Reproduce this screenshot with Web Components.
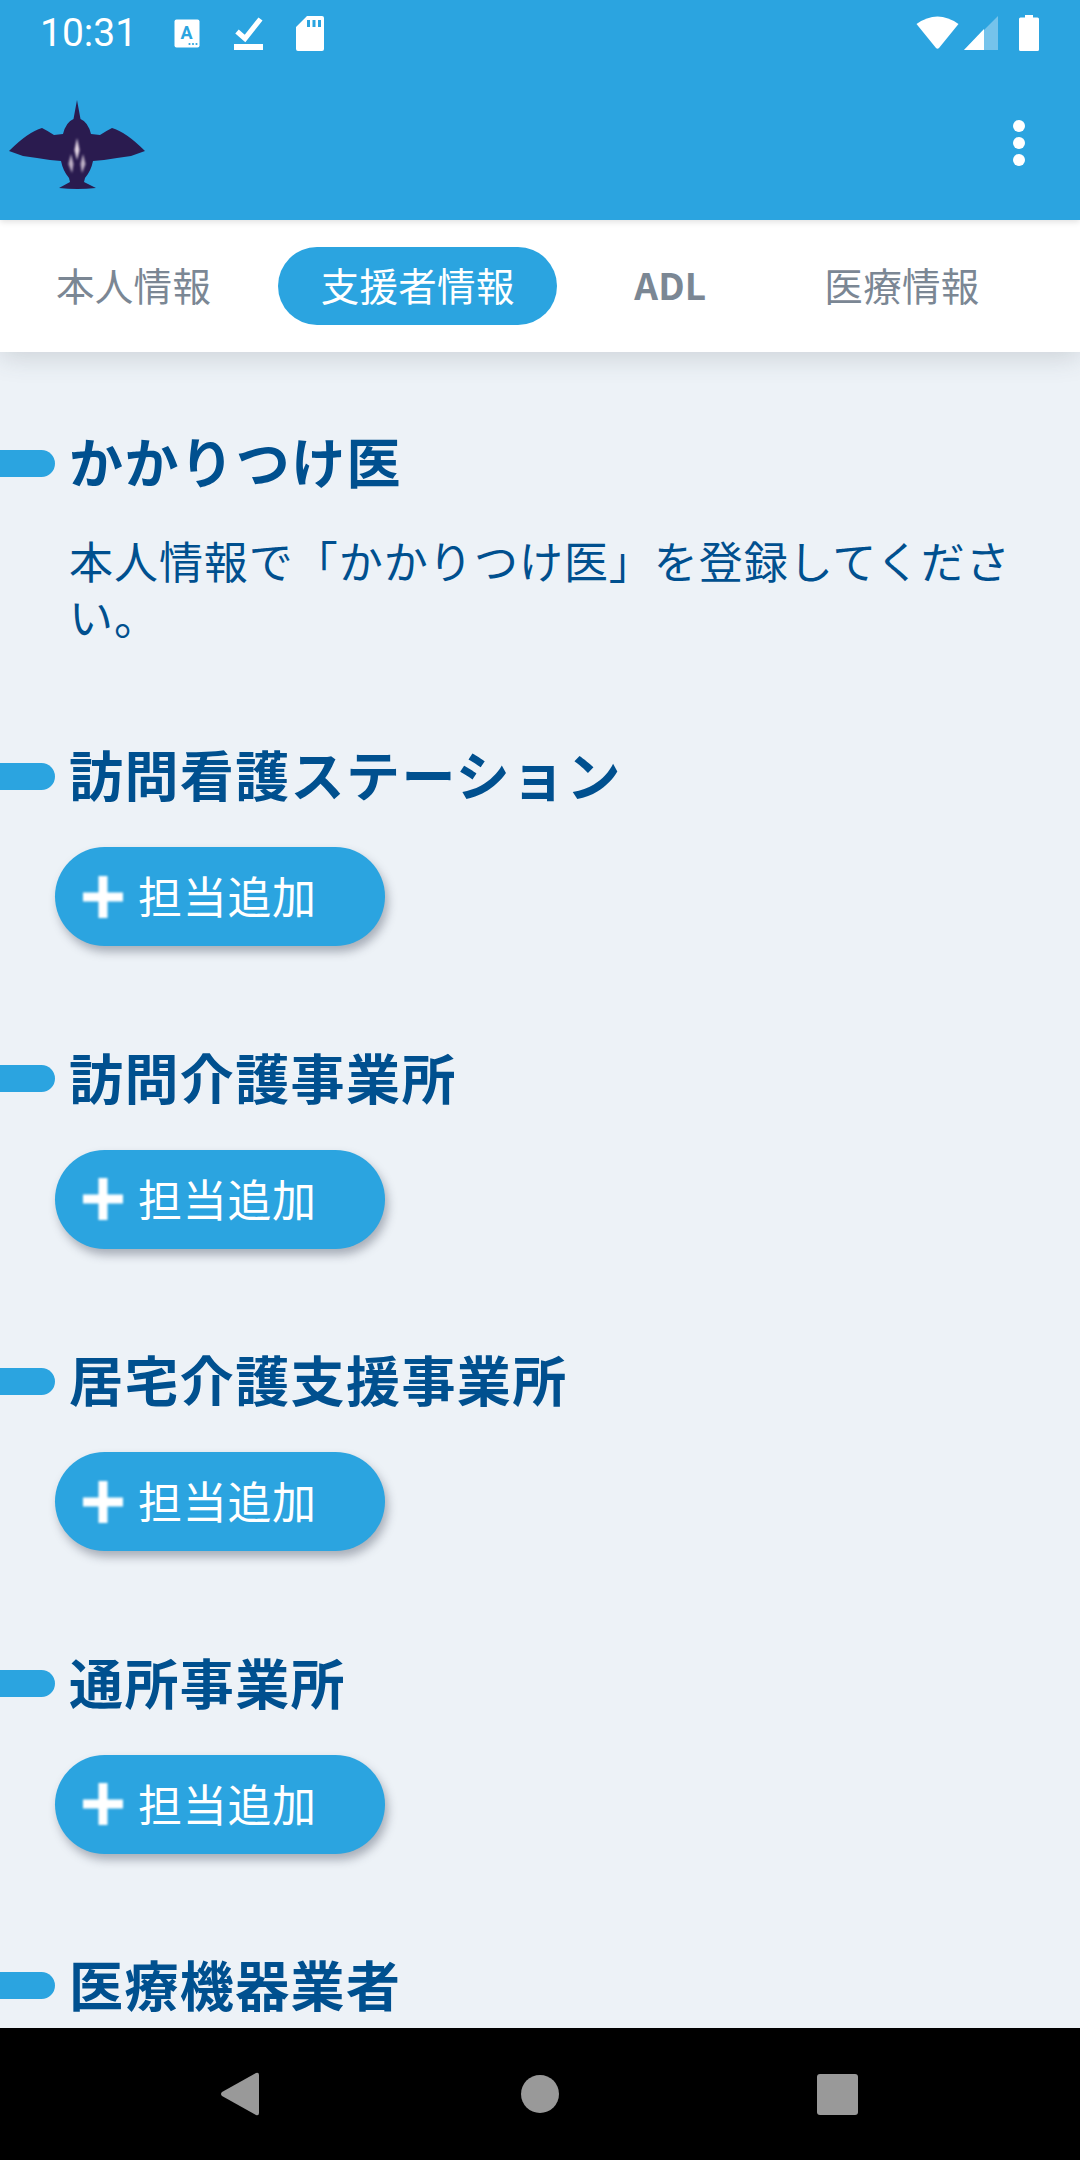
<!DOCTYPE html>
<html lang="ja">
<head>
<meta charset="utf-8">
<title>支援者情報</title>
<style>
  html, body { margin: 0; height: 2160px; overflow: hidden; background: #edf2f7; }
  body { display: flex; flex-direction: column; font-family: "Noto Sans CJK JP", "Noto Sans", sans-serif; }
  main { display: flex; flex-direction: column; flex: 1; min-height: 0; overflow: hidden; gap: 102.4px; padding-top: 81px; }
</style>
</head>
<body>
<app-header></app-header>
<tab-strip>
  <tab-item style="margin-left:14px">本人情報</tab-item>
  <tab-item active style="margin-left:25px">支援者情報</tab-item>
  <tab-item latin style="margin-left:35px">ADL</tab-item>
  <tab-item style="margin-left:34px">医療情報</tab-item>
</tab-strip>
<main>
  <care-section title="かかりつけ医" gap="39">
    <p>本人情報で「かかりつけ医」を登録してください。</p>
  </care-section>
  <care-section title="訪問看護ステーション"><add-button>担当追加</add-button></care-section>
  <care-section title="訪問介護事業所"><add-button>担当追加</add-button></care-section>
  <care-section title="居宅介護支援事業所"><add-button>担当追加</add-button></care-section>
  <care-section title="通所事業所"><add-button>担当追加</add-button></care-section>
  <care-section title="医療機器業者"></care-section>
</main>
<nav-bar></nav-bar>

<script>
(function () {
  const BLUE = '#2ba4e0';

  class AppHeader extends HTMLElement {
    connectedCallback() {
      const root = this.attachShadow({ mode: 'open' });
      root.innerHTML = `
        <style>
          :host { display:flex; flex-direction:column; height:220px; background:${BLUE}; position:relative; z-index:2; box-shadow:0 2px 6px rgba(0,0,0,.12); }
          .status { display:flex; align-items:center; height:66px; padding:0 0 0 40px; color:#fff; }
          .time { font:400 39px/1 Roboto, sans-serif; width:134px; }
          svg { display:block; flex:none; }
          .left { display:flex; align-items:center; flex:1; }
          .right { display:flex; align-items:center; }
          .bar { display:flex; align-items:center; justify-content:space-between; flex:1; padding:4px 55px 0 8px; }
          .dots { display:flex; flex-direction:column; gap:5px; margin-top:-5px; }
          .dots i { display:block; width:12px; height:12px; border-radius:50%; background:#fff; }
        </style>
        <div class="status">
          <span class="time">10:31</span>
          <div class="left">
            <svg width="26" height="29" viewBox="0 0 26 29"><rect x=".5" y=".5" width="25" height="28" rx="2" fill="#fff"/>
              <text x="12.5" y="20" text-anchor="middle" font-family="Roboto, sans-serif" font-weight="700" font-size="18" fill="${BLUE}">A</text>
              <circle cx="15.5" cy="25" r="1.1" fill="${BLUE}"/><circle cx="19" cy="25" r="1.1" fill="${BLUE}"/><circle cx="22.5" cy="25" r="1.1" fill="${BLUE}"/></svg>
            <svg style="margin-left:34px" width="29" height="35" viewBox="0 0 29 35"><path d="M3 15.5 L11 22.5 L26.5 3" fill="none" stroke="#fff" stroke-width="5.2"/><rect y="28" width="29" height="6" fill="#fff"/></svg>
            <svg style="margin-left:33px" width="28" height="35" viewBox="0 0 28 35"><path d="M11 0 H26 a2 2 0 0 1 2 2 V33 a2 2 0 0 1 -2 2 H2 a2 2 0 0 1 -2 -2 V11 Z M11 4 v7 h3 v-7 Z M16.5 4 v7 h3 v-7 Z M22 4 v7 h3 v-7 Z" fill="#fff" fill-rule="evenodd"/></svg>
          </div>
          <div class="right">
            <svg width="43" height="34" viewBox="0 0 43 34"><path d="M0.5 8 Q21.5 -7 42.5 8 L23 32 Q21.5 33.6 20 32 Z" fill="#fff"/></svg>
            <svg style="margin-left:5px" width="35" height="34" viewBox="0 0 35 34"><path d="M34 0 V34 H0 Z" fill="#fff" opacity=".35"/><path d="M20 13 V34 H0 Z" fill="#fff"/></svg>
            <svg style="margin:0 41px 0 20px" width="20" height="36" viewBox="0 0 20 36"><path d="M6 0 H14 V2.500 H18.500 a1.500 1.500 0 0 1 1.500 1.500 V34.500 a1.500 1.500 0 0 1 -1.500 1.500 H1.500 a1.500 1.500 0 0 1 -1.500 -1.500 V4 a1.500 1.500 0 0 1 1.500 -1.500 H6 Z" fill="#fff"/></svg>
          </div>
        </div>
        <div class="bar">
          <svg width="139" height="92" viewBox="8 99 139 92" aria-label="ロゴ" style="filter:blur(.7px)">
            <path fill="#2a1b4f" d="M77 100 L80.500 119 Q88 122 91 134 L100 135 Q106 131 112 128 Q126 132 145 151 L131 156 L117 158 L104 160 L93 161 Q91 171 85 178 L84 182 L96 188 Q77 190 59 188 L70 182 L69 178 Q63 171 61 161 L50 160 L37 158 L23 156 L9 151 Q28 132 42 128 Q48 131 54 135 L63 134 Q66 122 73.500 119 Z"/>
            <g filter="url(#soft)" fill="#e4d6e4">
              <path d="M77 138 L79.500 150 L77 160 L74.500 150 Z"/>
              <path d="M71 154 L73.500 164 L72 173 L68.500 164 Z" opacity=".8"/>
              <path d="M83 154 L85.500 164 L82 173 L80.500 164 Z" opacity=".8"/>
            </g>
            <defs><filter id="soft"><feGaussianBlur stdDeviation=".8"/></filter></defs>
          </svg>
          <div class="dots" aria-label="メニュー"><i></i><i></i><i></i></div>
        </div>`;
    }
  }

  class TabStrip extends HTMLElement {
    connectedCallback() {
      const root = this.attachShadow({ mode: 'open' });
      root.innerHTML = `
        <style>
          :host { display:flex; align-items:center; flex:none; height:132px; background:#fff; position:relative; z-index:1; box-shadow:0 4px 26px rgba(60,70,80,.2); box-sizing:border-box; }
        </style>
        <slot></slot>`;
    }
  }

  class TabItem extends HTMLElement {
    connectedCallback() {
      const root = this.attachShadow({ mode: 'open' });
      root.innerHTML = `
        <style>
          :host { display:block; height:78px; line-height:75px; padding:0 42px; border-radius:39px; font-size:38.500px; letter-spacing:.3px; color:#7b8794; white-space:nowrap; }
          :host([active]) { background:${BLUE}; color:#fff; padding:0 42.500px 0 42.500px; margin-right:0; }
          :host([latin]) { font-weight:700; font-size:37px; letter-spacing:.2px; }
        </style>
        <slot></slot>`;
    }
  }

  class CareSection extends HTMLElement {
    connectedCallback() {
      const root = this.attachShadow({ mode: 'open' });
      const gap = this.getAttribute('gap') || '41';
      root.innerHTML = `
        <style>
          :host { display:block; flex:none; }
          .head { display:flex; align-items:center; gap:14px; height:60px; }
          .mark { width:55px; height:27px; background:${BLUE}; border-radius:0 14px 14px 0; flex:none; }
          h2 { margin:0; padding-bottom:4px; font-size:54px; font-weight:700; line-height:56px; letter-spacing:1.400px; color:#00508f; white-space:nowrap; }
          .body { margin-top:${gap}px; }
          ::slotted(p) { margin:0; padding:0 40px 0 69px; font-size:44px; line-height:56px; letter-spacing:.95px; color:#00508f; }
          ::slotted(add-button) { margin-left:55px; }
        </style>
        <div class="head"><div class="mark"></div><h2></h2></div>
        <div class="body"><slot></slot></div>`;
      root.querySelector('h2').textContent = this.getAttribute('title');
    }
  }

  class AddButton extends HTMLElement {
    connectedCallback() {
      const root = this.attachShadow({ mode: 'open' });
      root.innerHTML = `
        <style>
          :host { display:flex; align-items:center; width:330px; height:99px; border-radius:50px; background:${BLUE}; color:#fff; box-shadow:3px 6px 10px rgba(40,50,70,.35); font-size:44px; letter-spacing:.7px; padding-left:28px; box-sizing:border-box; }
          svg { flex:none; margin-right:15px; filter:blur(.8px); }
          span { display:block; padding-bottom:3px; }
        </style>
        <svg width="40" height="44" viewBox="0 0 40 44"><path d="M20 1 V43 M0 22 H40" stroke="#fff" stroke-width="9" fill="none"/></svg>
        <span><slot></slot></span>`;
    }
  }

  class NavBar extends HTMLElement {
    connectedCallback() {
      const root = this.attachShadow({ mode: 'open' });
      root.innerHTML = `
        <style>
          :host { display:flex; align-items:center; flex:none; height:132px; background:#000; padding-left:221px; box-sizing:border-box; }
          svg { display:block; flex:none; }
        </style>
        <svg width="38" height="44" viewBox="0 0 38 44"><path d="M35 1 Q38 0 38 3 V41 Q38 44 35 43 L1 24 Q-1 22 1 20 Z" fill="#999"/></svg>
        <svg style="margin-left:262px" width="38" height="38" viewBox="0 0 38 38"><circle cx="19" cy="19" r="19" fill="#999"/></svg>
        <svg style="margin-left:258px" width="41" height="41" viewBox="0 0 41 41"><rect width="41" height="41" rx="3" fill="#999"/></svg>`;
    }
  }

  customElements.define('app-header', AppHeader);
  customElements.define('tab-strip', TabStrip);
  customElements.define('tab-item', TabItem);
  customElements.define('care-section', CareSection);
  customElements.define('add-button', AddButton);
  customElements.define('nav-bar', NavBar);
})();
</script>
</body>
</html>
